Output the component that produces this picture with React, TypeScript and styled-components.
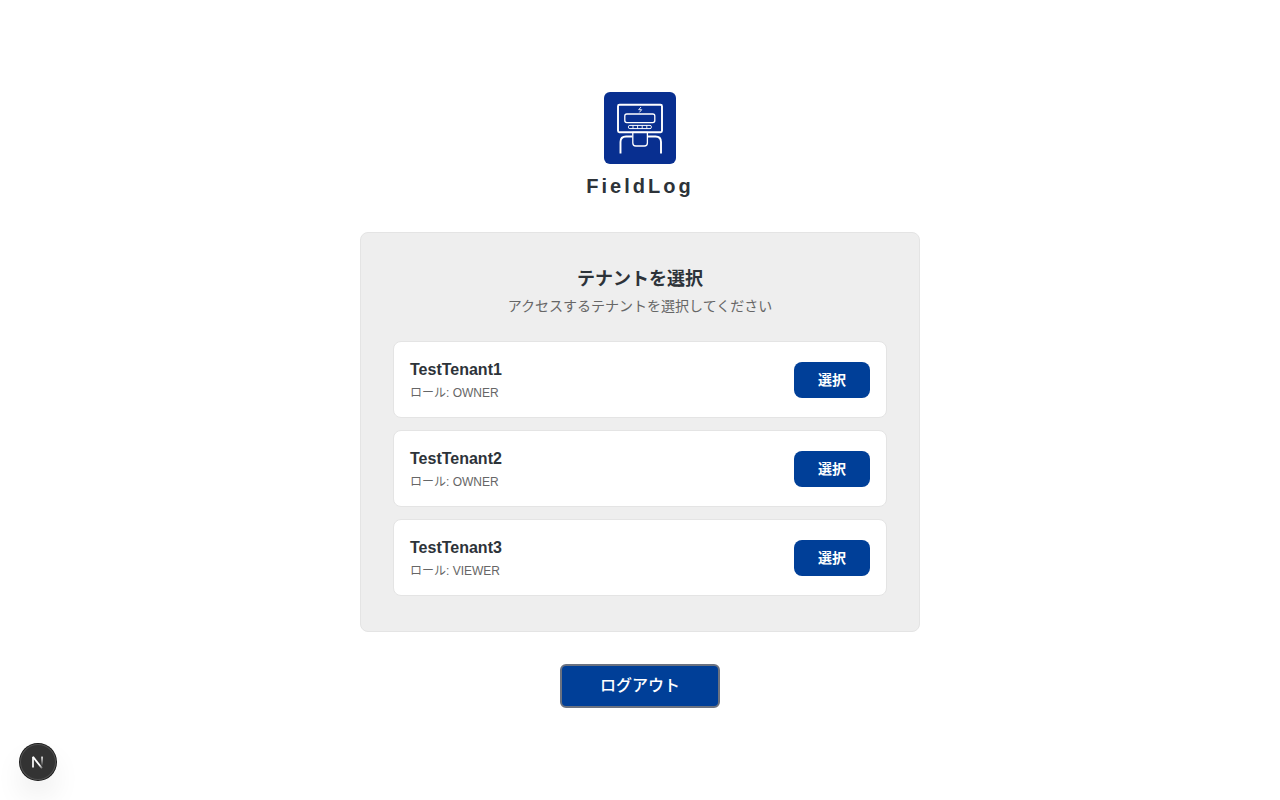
import React from 'react';
import styled, { createGlobalStyle } from 'styled-components';

const GlobalStyle = createGlobalStyle`
  *, *::before, *::after { box-sizing: border-box; }
  body {
    margin: 0;
    background: #ffffff;
    color: #2d3339;
    font-family: "Liberation Sans", "Noto Sans CJK JP", sans-serif;
  }
  h1, h2, h3, p, ul { margin: 0; padding: 0; }
  button { font-family: inherit; cursor: pointer; }
`;

const Page = styled.main`
  min-height: 100vh;
  display: flex;
  flex-direction: column;
  align-items: center;
  justify-content: center;
  gap: 32px;
  padding: 16px;
`;

const Brand = styled.header`
  display: flex;
  flex-direction: column;
  align-items: center;
  gap: 8px;
`;

const BrandName = styled.h1`
  font-size: 20px;
  line-height: 28px;
  font-weight: 700;
  letter-spacing: 3px;
`;

const Card = styled.section`
  width: 100%;
  max-width: 560px;
  padding: 32px 32px 35px;
  background: #eeeeee;
  border: 1px solid #e4e4e4;
  border-radius: 8px;
`;

const CardHead = styled.div`
  display: flex;
  flex-direction: column;
  gap: 2px;
  margin-bottom: 24px;
  text-align: center;
`;

const CardTitle = styled.h2`
  font-size: 18px;
  line-height: 29px;
  font-weight: 700;
`;

const CardText = styled.p`
  font-size: 14px;
  line-height: 21px;
  color: #666666;
`;

const TenantList = styled.ul`
  display: flex;
  flex-direction: column;
  gap: 12px;
  list-style: none;
`;

const TenantRow = styled.li`
  display: flex;
  align-items: center;
  justify-content: space-between;
  gap: 16px;
  padding: 16px;
  background: #ffffff;
  border: 1px solid #e4e4e4;
  border-radius: 8px;
`;

const TenantInfo = styled.div`
  display: flex;
  flex-direction: column;
  gap: 4px;
`;

const TenantName = styled.h3`
  font-size: 16px;
  line-height: 24px;
  font-weight: 700;
`;

const TenantRole = styled.p`
  font-size: 12px;
  line-height: 15px;
  color: #666666;
`;

const SelectButton = styled.button`
  height: 36px;
  padding: 0 24px;
  border: 0;
  border-radius: 8px;
  background: #003f98;
  color: #ffffff;
  font-size: 14px;
  line-height: 20px;
  font-weight: 700;
`;

const LogoutButton = styled.button`
  width: 160px;
  height: 44px;
  padding: 0;
  border: 2px solid #6b7280;
  border-radius: 6px;
  background: #003f98;
  color: #ffffff;
  font-size: 16px;
  line-height: 24px;
  font-weight: 500;
`;

const DevButton = styled.button`
  position: fixed;
  left: 20px;
  bottom: 20px;
  width: 36px;
  height: 36px;
  padding: 0;
  display: flex;
  align-items: center;
  justify-content: center;
  border: 0;
  border-radius: 50%;
  background: #333333;
  box-shadow:
    0 0 0 1px #171717,
    inset 0 0 0 1px #505050,
    0 16px 32px -8px rgba(0, 0, 0, 0.24);
`;

const Logo = () => (
  <svg width="72" height="72" viewBox="0 0 72 72" fill="none" role="img" aria-label="FieldLog">
    <rect width="72" height="72" rx="6" fill="#082f90" />
    <g stroke="#ffffff" strokeLinejoin="round">
      <rect x="14" y="12.7" width="44" height="27.6" rx="1.5" strokeWidth="1.9" />
      <rect x="20.8" y="22" width="30" height="8.6" rx="2" strokeWidth="1.3" />
      <rect x="24.4" y="33.4" width="23" height="3.2" rx="1.4" strokeWidth="1" />
      <path d="M29 33.4v3.2M33.6 33.4v3.2M38.2 33.4v3.2M42.8 33.4v3.2" strokeWidth=".9" />
      <path
        d="M16.5 61.5V50q0-5.5 5.5-5.5h6.5M57 61.5V50q0-5.5-5.5-5.5h-8"
        strokeWidth="1.9"
      />
      <path d="M28.8 40.5V51q0 3 3 3h8.6q3 0 3-3V40.5z" fill="#082f90" strokeWidth="1.3" />
    </g>
    <path
      d="M37 15l-2.3 2.7h3L35.4 20.4"
      stroke="#ffffff"
      strokeWidth=".9"
      strokeLinejoin="round"
    />
  </svg>
);

const NextMark = () => (
  <svg width="14" height="14" viewBox="0 0 14 14" fill="none" aria-hidden="true">
    <defs>
      <linearGradient id="diagonal" x1="9" y1="9.5" x2="13" y2="14" gradientUnits="userSpaceOnUse">
        <stop stopColor="#ffffff" />
        <stop offset="1" stopColor="#ffffff" stopOpacity="0" />
      </linearGradient>
      <linearGradient id="stem" x1="0" y1="1" x2="0" y2="11" gradientUnits="userSpaceOnUse">
        <stop stopColor="#ffffff" />
        <stop offset="1" stopColor="#ffffff" stopOpacity="0" />
      </linearGradient>
    </defs>
    <path d="M2 12.5V1.7" stroke="#ffffff" strokeWidth="1.7" />
    <path d="M2 1.9L11 13.2" stroke="url(#diagonal)" strokeWidth="1.8" />
    <rect x="10.2" y="1.6" width="1.7" height="9.4" fill="url(#stem)" />
  </svg>
);

const tenants = [
  { name: 'TestTenant1', role: 'OWNER' },
  { name: 'TestTenant2', role: 'OWNER' },
  { name: 'TestTenant3', role: 'VIEWER' },
];

export default function App() {
  return (
    <>
      <GlobalStyle />
      <Page lang="ja">
        <Brand>
          <Logo />
          <BrandName>FieldLog</BrandName>
        </Brand>
        <Card aria-labelledby="tenant-title">
          <CardHead>
            <CardTitle id="tenant-title">テナントを選択</CardTitle>
            <CardText>アクセスするテナントを選択してください</CardText>
          </CardHead>
          <TenantList>
            {tenants.map((tenant) => (
              <TenantRow key={tenant.name}>
                <TenantInfo>
                  <TenantName>{tenant.name}</TenantName>
                  <TenantRole>ロール: {tenant.role}</TenantRole>
                </TenantInfo>
                <SelectButton type="button">選択</SelectButton>
              </TenantRow>
            ))}
          </TenantList>
        </Card>
        <LogoutButton type="button">ログアウト</LogoutButton>
      </Page>
      <DevButton type="button" aria-label="Open Next.js Dev Tools">
        <NextMark />
      </DevButton>
    </>
  );
}
